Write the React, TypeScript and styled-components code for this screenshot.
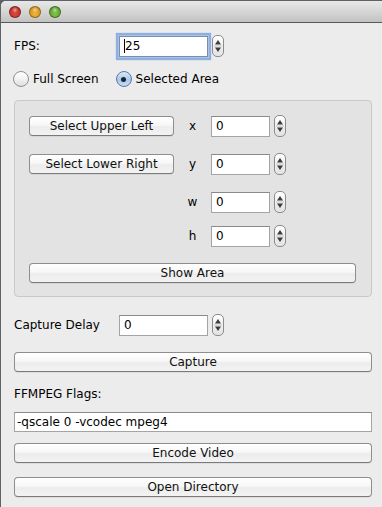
import React from 'react';
import styled, { createGlobalStyle, css } from 'styled-components';

const GlobalStyle = createGlobalStyle`
  html, body {
    margin: 0;
    padding: 0;
    background: #5e6166;
    font-family: "DejaVu Sans", "Liberation Sans", sans-serif;
    font-size: 12px;
    color: #000;
  }
  #root {
    width: 382px;
    height: 507px;
    overflow: hidden;
  }
`;

const Window = styled.div`
  margin: 1px 0 0 1px;
  height: 506px;
  background: #ececec;
  border-top-left-radius: 5px;
  overflow: hidden;
  display: flex;
  flex-direction: column;
`;

const TitleBar = styled.div`
  height: 21px;
  flex: none;
  background: linear-gradient(#e8e8e8, #d2d2d2 60%, #c2c2c2);
  border-bottom: 1px solid #595959;
  display: flex;
  align-items: center;
  gap: 8px;
  padding-left: 8px;
`;

const Light = styled.span<{ $c1: string; $c2: string }>`
  width: 12px;
  height: 12px;
  border-radius: 50%;
  box-sizing: border-box;
  border: 1px solid rgba(0, 0, 0, 0.35);
  background: radial-gradient(circle at 50% 30%, #fff8 0, transparent 35%),
    radial-gradient(circle at 50% 70%, ${p => p.$c1}, ${p => p.$c2});
  margin-top: 1px;
`;

const Content = styled.div`
  display: flex;
  flex-direction: column;
  padding: 0 11px 0 13px;
`;

const Row = styled.div<{ $top: number }>`
  display: flex;
  align-items: center;
  height: 22px;
  margin-top: ${p => p.$top}px;
`;

const Label = styled.span<{ $w?: number }>`
  width: ${p => (p.$w ? `${p.$w}px` : 'auto')};
  flex: none;
  white-space: nowrap;
`;

const fieldBase = css`
  box-sizing: border-box;
  background: #fff;
  border: 1px solid #a4a4a4;
  border-top-color: #8a8a8a;
  height: 21px;
  display: flex;
  align-items: center;
  padding-left: 4px;
  white-space: nowrap;
  flex: none;
`;

const Field = styled.div<{ $w: number; $focus?: boolean }>`
  ${fieldBase};
  width: ${p => p.$w}px;
  ${p =>
    p.$focus &&
    css`
      border-color: #7a8fb0;
      box-shadow: 0 0 0 1px #a9c2e6, 0 0 1px 3px #8eb0e0;
    `}
`;

const WideField = styled.div`
  ${fieldBase};
  margin-top: 10px;
  height: 20px;
  width: 358px;
  padding-left: 2px;
`;

const Caret = styled.span`
  width: 1px;
  height: 14px;
  background: #000;
`;

const SpinBox = styled.div`
  flex: none;
  margin-left: 4px;
  width: 12px;
  height: 22px;
  box-sizing: border-box;
  border: 1px solid #8c8c8c;
  border-radius: 5px;
  background: linear-gradient(#ffffff, #f0f0f0 50%, #e2e2e2);
  display: flex;
  align-items: center;
  justify-content: center;
`;

const Spinner = () => (
  <SpinBox>
    <svg width="10" height="20" viewBox="0 0 10 20">
      <path d="M5 4 L8 8.5 L2 8.5 Z" fill="#3c3c3c" />
      <line x1="1" y1="10" x2="9" y2="10" stroke="#c8c8c8" strokeWidth="1" />
      <path d="M5 16 L8 11.5 L2 11.5 Z" fill="#3c3c3c" />
    </svg>
  </SpinBox>
);

const RadioRow = styled.div`
  display: flex;
  align-items: center;
  height: 16px;
  margin: 14px 0 0 -1px;
`;

const RadioItem = styled.label`
  display: flex;
  align-items: center;
  gap: 4px;
  margin-right: 17px;
`;

const RadioCircle = styled.span<{ $on?: boolean }>`
  width: 16px;
  height: 16px;
  box-sizing: border-box;
  border-radius: 50%;
  border: 1px solid ${p => (p.$on ? '#5a77a8' : '#8f8f8f')};
  background: ${p =>
    p.$on
      ? 'linear-gradient(#dce8f7, #a9c8ee 55%, #c8dcf4)'
      : 'linear-gradient(#ffffff, #f2f2f2 50%, #dedede)'};
  display: flex;
  align-items: center;
  justify-content: center;
  &::after {
    content: '';
    width: 5px;
    height: 5px;
    border-radius: 50%;
    background: #1d2533;
    display: ${p => (p.$on ? 'block' : 'none')};
  }
`;

const Panel = styled.div`
  margin-top: 13px;
  width: 358px;
  box-sizing: border-box;
  background: #e3e3e3;
  border: 1px solid #c9c9c9;
  border-radius: 4px;
  padding: 14px 15px 13px 14px;
  display: flex;
  flex-direction: column;
`;

const PanelRow = styled.div<{ $top: number }>`
  display: grid;
  grid-template-columns: 145px 37px 1fr;
  height: 22px;
  align-items: center;
  margin-top: ${p => p.$top}px;
`;

const PanelLabel = styled.span`
  grid-column: 2;
  text-align: center;
`;

const FieldCell = styled.div`
  grid-column: 3;
  display: flex;
  align-items: center;
`;

const Button = styled.button<{ $top?: number }>`
  font: inherit;
  color: #111;
  height: 20px;
  box-sizing: border-box;
  border: 1px solid #8e8e8e;
  border-bottom-color: #7a7a7a;
  border-radius: 4px;
  background: linear-gradient(#ffffff, #f7f7f7 45%, #ececec 55%, #f3f3f3);
  box-shadow: 0 1px 0 rgba(0, 0, 0, 0.06);
  padding: 0;
  text-align: center;
  ${p => p.$top !== undefined && css`margin-top: ${p.$top}px;`}
`;

const WideButton = styled(Button)`
  width: 358px;
`;

const FlagsLabel = styled.div`
  margin-top: 14px;
  height: 16px;
  line-height: 16px;
`;

const coords = [
  { c: 'x', btn: 'Select Upper Left', top: 0 },
  { c: 'y', btn: 'Select Lower Right', top: 16 },
  { c: 'w', btn: '', top: 16 },
  { c: 'h', btn: '', top: 12 },
];

export default function App() {
  return (
    <>
      <GlobalStyle />
      <Window>
        <TitleBar>
          <Light $c1="#e0463f" $c2="#b52b24" />
          <Light $c1="#f0b43a" $c2="#c98a12" />
          <Light $c1="#83c24a" $c2="#4f9a22" />
        </TitleBar>
        <Content>
          <Row $top={12}>
            <Label $w={105}>FPS:</Label>
            <Field $w={89} $focus>
              <Caret />
              25
            </Field>
            <Spinner />
          </Row>
          <RadioRow>
            <RadioItem>
              <RadioCircle />
              Full Screen
            </RadioItem>
            <RadioItem>
              <RadioCircle $on />
              Selected Area
            </RadioItem>
          </RadioRow>
          <Panel>
            {coords.map(r => (
              <PanelRow key={r.c} $top={r.top}>
                {r.btn ? <Button>{r.btn}</Button> : <span />}
                <PanelLabel>{r.c}</PanelLabel>
                <FieldCell>
                  <Field $w={59}>0</Field>
                  <Spinner />
                </FieldCell>
              </PanelRow>
            ))}
            <Button $top={16}>Show Area</Button>
          </Panel>
          <Row $top={17}>
            <Label $w={105}>Capture Delay</Label>
            <Field $w={89}>0</Field>
            <Spinner />
          </Row>
          <WideButton $top={16}>Capture</WideButton>
          <FlagsLabel>FFMPEG Flags:</FlagsLabel>
          <WideField>-qscale 0 -vcodec mpeg4</WideField>
          <WideButton $top={11}>Encode Video</WideButton>
          <WideButton $top={14}>Open Directory</WideButton>
        </Content>
      </Window>
    </>
  );
}
